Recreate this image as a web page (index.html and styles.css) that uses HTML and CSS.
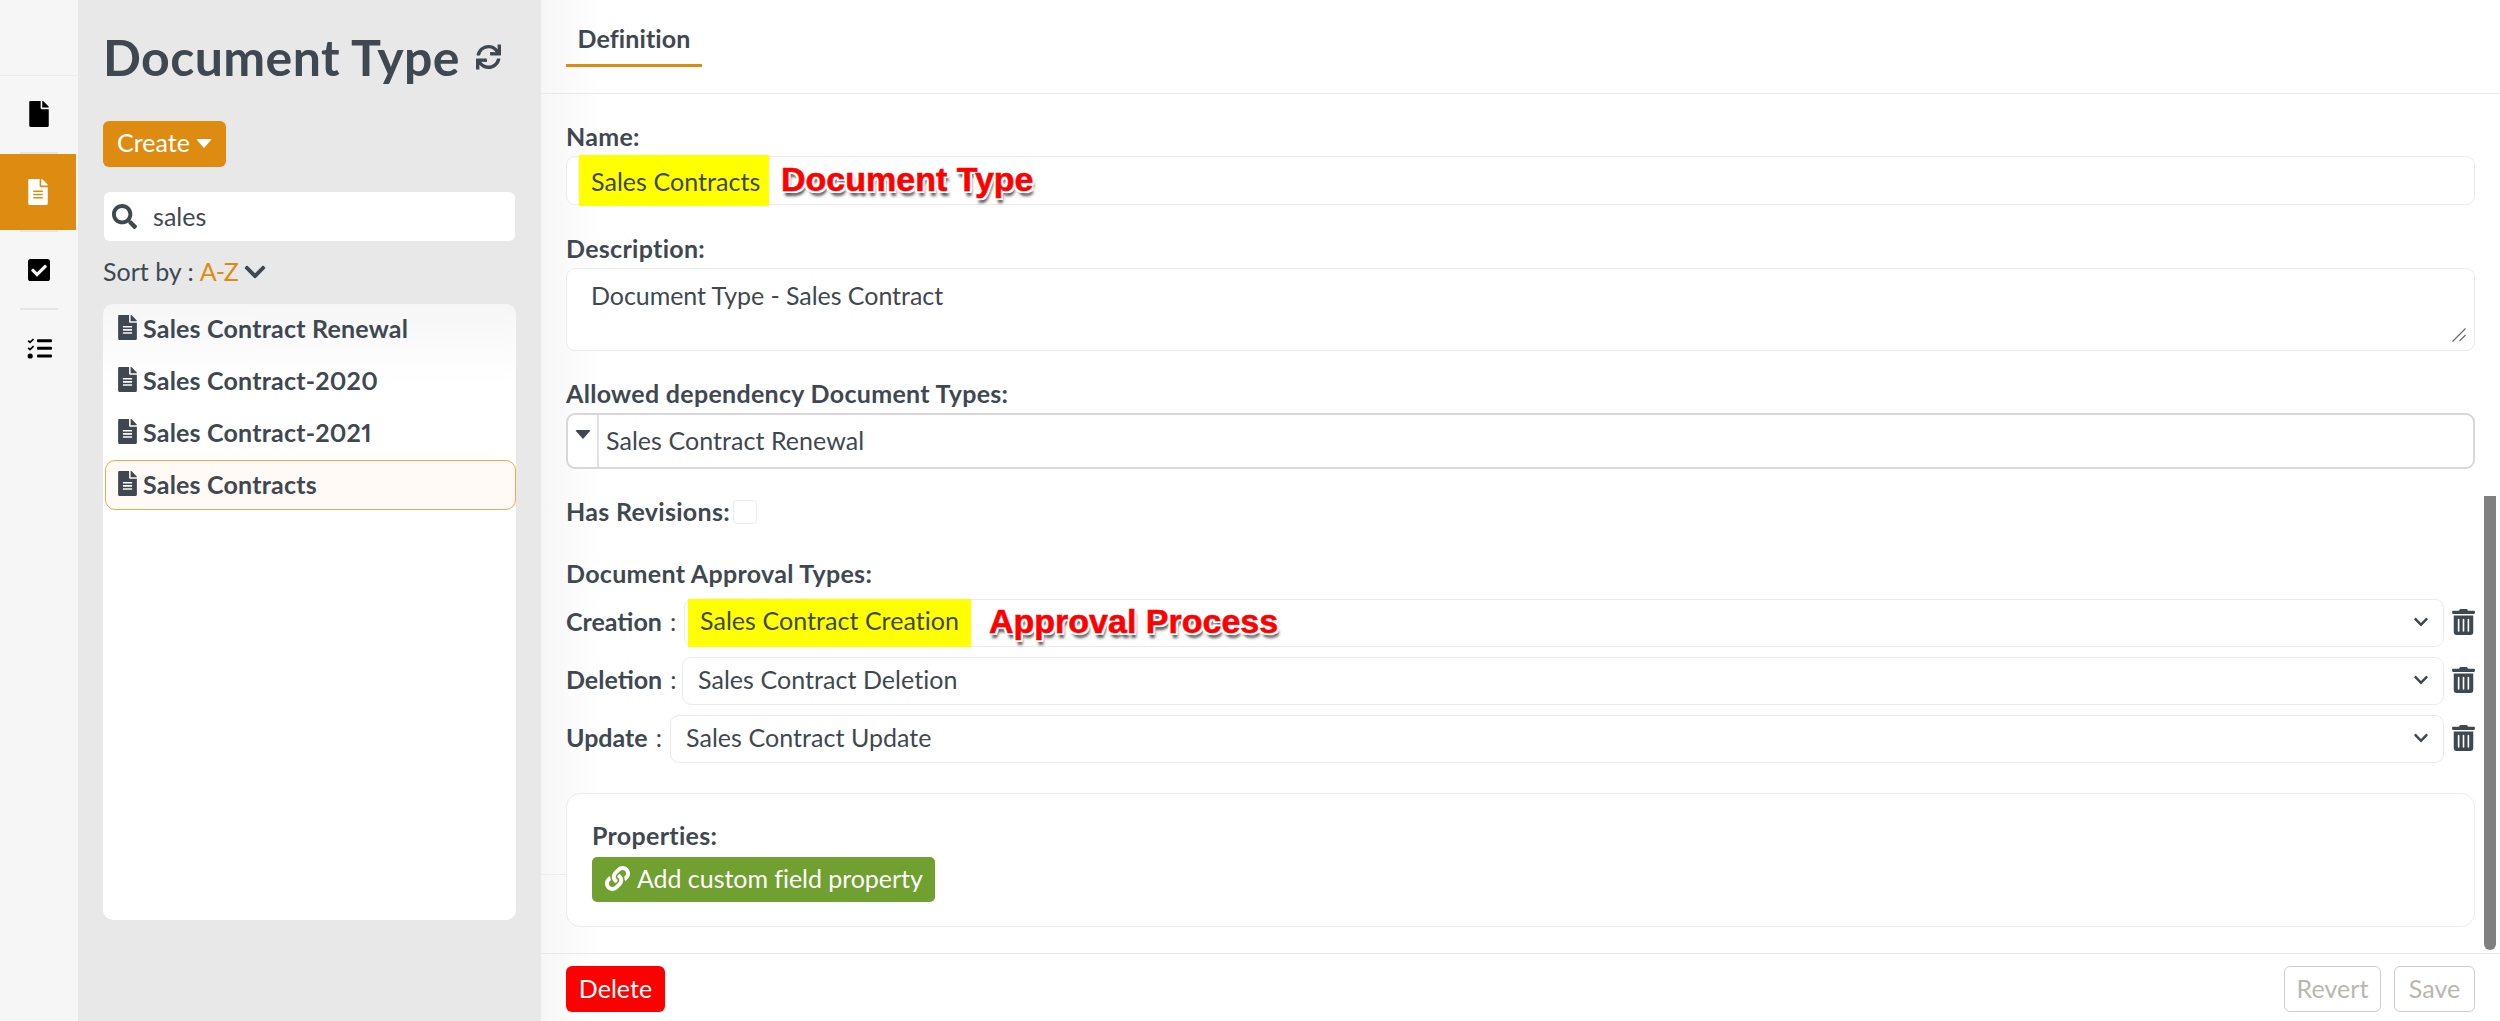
FILE: index.html
```html
<!DOCTYPE html>
<html lang="en">
<head>
<meta charset="utf-8">
<title>Document Type</title>
<link rel="stylesheet" href="styles.css">
</head>
<body>
<svg class="defs" aria-hidden="true">
  <symbol id="i-file" viewBox="0 0 384 512"><path d="M224 136V0H24C10.7 0 0 10.7 0 24v464c0 13.3 10.7 24 24 24h336c13.3 0 24-10.7 24-24V160H248c-13.2 0-24-10.8-24-24zm160-14.1v6.1H256V0h6.1c6.4 0 12.5 2.5 17 7l97.9 98c4.5 4.5 7 10.6 7 16.9z"/></symbol>
  <symbol id="i-file-alt" viewBox="0 0 384 512"><path d="M224 136V0H24C10.7 0 0 10.7 0 24v464c0 13.3 10.7 24 24 24h336c13.3 0 24-10.7 24-24V160H248c-13.2 0-24-10.8-24-24zm64 236c0 6.6-5.4 12-12 12H108c-6.6 0-12-5.4-12-12v-8c0-6.6 5.4-12 12-12h168c6.6 0 12 5.4 12 12v8zm0-64c0 6.6-5.4 12-12 12H108c-6.6 0-12-5.4-12-12v-8c0-6.6 5.4-12 12-12h168c6.6 0 12 5.4 12 12v8zm0-72v8c0 6.6-5.4 12-12 12H108c-6.6 0-12-5.4-12-12v-8c0-6.6 5.4-12 12-12h168c6.6 0 12 5.4 12 12zm96-114.1v6.1H256V0h6.1c6.4 0 12.5 2.5 17 7l97.9 98c4.5 4.5 7 10.6 7 16.9z"/></symbol>
  <symbol id="i-check" viewBox="0 0 448 512"><path d="M400 480H48c-26.51 0-48-21.49-48-48V80c0-26.51 21.49-48 48-48h352c26.51 0 48 21.49 48 48v352c0 26.51-21.49 48-48 48zm-204.686-98.059l184-184c6.248-6.248 6.248-16.379 0-22.627l-22.627-22.627c-6.248-6.248-16.379-6.249-22.628 0L184 302.745l-70.059-70.059c-6.248-6.248-16.379-6.248-22.628 0l-22.627 22.627c-6.248 6.248-6.248 16.379 0 22.627l104 104c6.249 6.25 16.379 6.25 22.628.001z"/></symbol>
  <symbol id="i-tasks" viewBox="0 0 25 21"><path d="M0.6 3.2l1.2-1.2 1.2 1.2L6 0.4l1.2 1.2L3 5.6zM0.6 10.4l1.2-1.2 1.2 1.2L6 7.6l1.2 1.2L3 12.8z"/><circle cx="3.2" cy="18" r="2.6"/><rect x="10" y="1.2" width="15" height="3" rx="1"/><rect x="10" y="8.8" width="15" height="3" rx="1"/><rect x="10" y="16.4" width="15" height="3" rx="1"/></symbol>
  <symbol id="i-sync" viewBox="0 0 512 512"><path d="M440.65 12.57l4 82.77A247.16 247.16 0 0 0 255.83 8C134.73 8 33.91 94.92 12.29 209.82A12 12 0 0 0 24.09 224h49.05a12 12 0 0 0 11.67-9.26 175.91 175.91 0 0 1 317-56.94l-101.46-4.86a12 12 0 0 0-12.57 12v47.41a12 12 0 0 0 12 12H500a12 12 0 0 0 12-12V12a12 12 0 0 0-12-12h-47.37a12 12 0 0 0-11.98 12.57zM255.83 432a175.61 175.61 0 0 1-146-77.8l101.8 4.87a12 12 0 0 0 12.57-12v-47.4a12 12 0 0 0-12-12H12a12 12 0 0 0-12 12V500a12 12 0 0 0 12 12h47.35a12 12 0 0 0 12-12.6l-4.15-82.57A247.17 247.17 0 0 0 255.83 504c121.11 0 221.93-86.92 243.55-201.82a12 12 0 0 0-11.8-14.18h-49.05a12 12 0 0 0-11.67 9.26A175.86 175.86 0 0 1 255.83 432z"/></symbol>
  <symbol id="i-search" viewBox="0 0 512 512"><path d="M505 442.7L405.3 343c-4.5-4.5-10.6-7-17-7H372c27.6-35.3 44-79.7 44-128C416 93.1 322.9 0 208 0S0 93.1 0 208s93.1 208 208 208c48.3 0 92.7-16.4 128-44v16.3c0 6.4 2.5 12.5 7 17l99.7 99.7c9.4 9.4 24.6 9.4 33.9 0l28.3-28.3c9.4-9.4 9.4-24.6.1-34zM208 336c-70.7 0-128-57.2-128-128 0-70.7 57.2-128 128-128 70.7 0 128 57.2 128 128 0 70.7-57.2 128-128 128z"/></symbol>
  <symbol id="i-chevron" viewBox="0 0 448 512"><path d="M207.029 381.476L12.686 187.132c-9.373-9.373-9.373-24.569 0-33.941l22.667-22.667c9.357-9.357 24.522-9.375 33.901-.04L224 284.505l154.745-154.021c9.379-9.335 24.544-9.317 33.901.04l22.667 22.667c9.373 9.373 9.373 24.569 0 33.941L240.971 381.476c-9.373 9.372-24.569 9.372-33.942 0z"/></symbol>
  <symbol id="i-trash" viewBox="0 0 448 512"><path d="M32 464a48 48 0 0 0 48 48h288a48 48 0 0 0 48-48V128H32zm272-256a16 16 0 0 1 32 0v224a16 16 0 0 1-32 0zm-96 0a16 16 0 0 1 32 0v224a16 16 0 0 1-32 0zm-96 0a16 16 0 0 1 32 0v224a16 16 0 0 1-32 0zM432 32H312l-9.4-18.7A24 24 0 0 0 281.1 0H166.8a23.72 23.72 0 0 0-21.4 13.3L136 32H16A16 16 0 0 0 0 48v32a16 16 0 0 0 16 16h416a16 16 0 0 0 16-16V48a16 16 0 0 0-16-16z"/></symbol>
  <symbol id="i-link" viewBox="0 0 512 512"><path d="M326.612 185.391c59.747 59.809 58.927 155.698.36 214.59-.11.12-.24.25-.36.37l-67.2 67.2c-59.27 59.27-155.699 59.262-214.96 0-59.27-59.26-59.27-155.7 0-214.96l37.106-37.106c9.84-9.84 26.786-3.3 27.294 10.606.648 17.722 3.826 35.527 9.69 52.721 1.986 5.822.567 12.262-3.783 16.612l-13.087 13.087c-28.026 28.026-28.905 73.66-1.155 101.96 28.024 28.579 74.086 28.749 102.325.51l67.2-67.19c28.191-28.191 28.073-73.757 0-101.83-3.701-3.694-7.429-6.564-10.341-8.569a16.037 16.037 0 0 1-6.947-12.606c-.396-10.567 3.348-21.456 11.698-29.806l21.054-21.055c5.521-5.521 14.182-6.199 20.584-1.731a152.482 152.482 0 0 1 20.522 17.197zM467.547 44.449c-59.261-59.262-155.69-59.27-214.96 0l-67.2 67.2c-.12.12-.25.25-.36.37-58.566 58.892-59.387 154.781.36 214.59a152.454 152.454 0 0 0 20.521 17.196c6.402 4.468 15.064 3.789 20.584-1.731l21.054-21.055c8.35-8.35 12.094-19.239 11.698-29.806a16.037 16.037 0 0 0-6.947-12.606c-2.912-2.005-6.64-4.875-10.341-8.569-28.073-28.073-28.191-73.639 0-101.83l67.2-67.19c28.239-28.239 74.3-28.069 102.325.51 27.75 28.3 26.872 73.934-1.155 101.96l-13.087 13.087c-4.35 4.35-5.769 10.79-3.783 16.612 5.864 17.194 9.042 34.999 9.69 52.721.509 13.906 17.454 20.446 27.294 10.606l37.106-37.106c59.271-59.259 59.271-155.699.001-214.959z"/></symbol>
</svg>

<div class="app">
  <nav class="rail">
    <a class="rail-item"><svg class="ic-rail"><use href="#i-file"/></svg></a>
    <div class="rail-div"></div>
    <a class="rail-item is-active"><svg class="ic-rail"><use href="#i-file-alt"/></svg></a>
    <div class="rail-div"></div>
    <a class="rail-item"><svg class="ic-rail-check"><use href="#i-check"/></svg></a>
    <div class="rail-div"></div>
    <a class="rail-item"><svg class="ic-rail-tasks"><use href="#i-tasks"/></svg></a>
  </nav>

  <aside class="sidebar">
    <div class="title-row">
      <h1 class="title">Document Type</h1>
      <svg class="ic-sync"><use href="#i-sync"/></svg>
    </div>
    <button class="btn-create">Create<span class="caret"></span></button>
    <div class="search">
      <svg class="ic-search"><use href="#i-search"/></svg>
      <span class="search-text">sales</span>
    </div>
    <div class="sort">
      <span>Sort by :</span><span class="sort-val">A-Z</span>
      <svg class="ic-sort"><use href="#i-chevron"/></svg>
    </div>
    <ul class="list">
      <li class="list-item"><svg class="ic-doc"><use href="#i-file-alt"/></svg>Sales Contract Renewal</li>
      <li class="list-item"><svg class="ic-doc"><use href="#i-file-alt"/></svg>Sales Contract-2020</li>
      <li class="list-item"><svg class="ic-doc"><use href="#i-file-alt"/></svg>Sales Contract-2021</li>
      <li class="list-item is-selected"><svg class="ic-doc"><use href="#i-file-alt"/></svg>Sales Contracts</li>
    </ul>
  </aside>

  <main class="main">
    <div class="tabs"><div class="tab">Definition</div></div>
    <div class="side-line"></div>
    <div class="scrollbar"></div>

    <form class="form">
      <div class="label l-name">Name:</div>
      <div class="field f-name">
        <span class="hl hl-name">Sales Contracts</span>
        <span class="note note-doc">Document Type</span>
      </div>

      <div class="label l-next">Description:</div>
      <div class="field f-desc">
        Document Type - Sales Contract
        <svg class="grip" viewBox="0 0 14 14"><path d="M0.5 13.5L13.5 0.5M7.5 13L13.5 7"/></svg>
      </div>

      <div class="label l-allowed">Allowed dependency Document Types:</div>
      <div class="field f-multi">
        <span class="multi-arrow"><span class="caret caret-dark"></span></span>
        <span class="multi-text">Sales Contract Renewal</span>
      </div>

      <div class="check-row">
        <span class="label">Has Revisions:</span>
        <span class="checkbox"></span>
      </div>

      <div class="label l-approval">Document Approval Types:</div>

      <div class="row r-first">
        <span class="label row-label w-creation">Creation <span class="colon">:</span></span>
        <div class="field f-select f-creation">
          <span class="hl hl-creation">Sales Contract Creation</span>
          <span class="note note-approval">Approval Process</span>
          <svg class="ic-select"><use href="#i-chevron"/></svg>
        </div>
        <svg class="ic-trash"><use href="#i-trash"/></svg>
      </div>
      <div class="row">
        <span class="label row-label w-deletion">Deletion <span class="colon">:</span></span>
        <div class="field f-select">
          <span>Sales Contract Deletion</span>
          <svg class="ic-select"><use href="#i-chevron"/></svg>
        </div>
        <svg class="ic-trash"><use href="#i-trash"/></svg>
      </div>
      <div class="row">
        <span class="label row-label w-update">Update <span class="colon">:</span></span>
        <div class="field f-select">
          <span>Sales Contract Update</span>
          <svg class="ic-select"><use href="#i-chevron"/></svg>
        </div>
        <svg class="ic-trash"><use href="#i-trash"/></svg>
      </div>

      <section class="props">
        <div class="label">Properties:</div>
        <button type="button" class="btn-add"><svg class="ic-link"><use href="#i-link"/></svg>Add custom field property</button>
      </section>
    </form>

    <footer class="footer">
      <button class="btn-delete">Delete</button>
      <div class="footer-right">
        <button class="btn-ghost b-revert">Revert</button>
        <button class="btn-ghost b-save">Save</button>
      </div>
    </footer>
  </main>
</div>
</body>
</html>
```

FILE: styles.css
```css
* { box-sizing: border-box; }
html, body { margin: 0; padding: 0; height: 1021px; overflow: hidden; }
body {
  font-family: "Lato", "Liberation Sans", sans-serif;
  font-size: 25px;
  color: #3f4850;
  background: #fff;
  letter-spacing: 0.05px;
  font-variant-numeric: proportional-nums;
}
.defs { position: absolute; width: 0; height: 0; }
svg { fill: currentColor; display: block; flex: none; }
button { font: inherit; letter-spacing: inherit; cursor: pointer; }
ul { list-style: none; margin: 0; padding: 0; }

.app { display: flex; height: 1021px; }

/* rail */
.rail { width: 78px; flex: none; background: #f6f6f6; padding-top: 75px; }
.rail::before { content: ""; display: block; height: 1px; background: #ebebeb; }
.rail-item { display: flex; align-items: center; justify-content: center; height: 76px; color: #000; }
.rail-item.is-active { background: #de8b12; color: #fff; width: 76px; }
.rail-div { height: 2px; margin: 0 20px; background: #e6e6e6; }
.ic-rail { width: 20px; height: 26px; }
.ic-rail-check { width: 22px; height: 26px; }
.ic-rail-tasks { width: 25px; height: 21px; }

/* sidebar */
.sidebar { width: 463px; flex: none; background: #e8e8e8; padding: 30px 25px 0; display: flex; flex-direction: column; align-items: flex-start; }
.title-row { display: flex; align-items: center; height: 54px; }
.title { margin: 0; font-size: 50px; font-weight: 700; line-height: 54px; letter-spacing: 0.4px; }
.ic-sync { width: 25px; height: 26px; margin-left: 16px; margin-top: -1px; }
.btn-create {
  margin-top: 37px; height: 46px; width: 123px; border: 0; border-radius: 6px;
  background: #de8b12; color: #fff; display: flex; align-items: center; justify-content: center; padding: 0 0 4px;
}
.caret { display: inline-block; margin-left: 6px; margin-top: 3px; border-style: solid; border-color: transparent; border-top-color: #fff; border-width: 9px 8.5px 0; border-radius: 2px; }
.search { margin-top: 25px; margin-left: 1px; width: 411px; height: 49px; background: #fff; border-radius: 6px; display: flex; align-items: center; padding-left: 8px; }
.ic-search { width: 25px; height: 25px; }
.search-text { margin-left: 16px; margin-bottom: 2px; }
.sort { margin-top: 15px; height: 32px; display: flex; align-items: center; letter-spacing: 0; }
.sort > span { margin-bottom: 2px; }
.sort-val { color: #de8b12; margin-left: 6px; letter-spacing: -1px; }
.ic-sort { width: 22px; height: 24px; margin-left: 6px; }
.list { margin-top: 16px; width: 413px; height: 616px; border-radius: 10px; background: linear-gradient(#f6f6f6, #fff 80px); padding: 0 0 0 2px; display: flex; flex-direction: column; gap: 2px; }
.list-item { height: 50px; border: 1px solid transparent; border-radius: 10px; display: flex; align-items: center; padding: 0 0 2px 12px; font-weight: 700; letter-spacing: 0.2px; }
.list-item.is-selected { background: #fffaf6; border-color: #f0a94e; }
.ic-doc { width: 19px; height: 25px; margin-right: 6px; margin-top: -2px; }

/* main */
.main { flex: 1; position: relative; display: flex; flex-direction: column; background: linear-gradient(90deg, #f6f6f6, #fff 60px); }
.tabs { height: 94px; flex: none; border-bottom: 1px solid #e8e8e8; padding-left: 25px; }
.tab { width: 136px; height: 67px; padding-top: 23px; line-height: 30px; text-align: center; font-weight: 700; letter-spacing: 0.1px; border-bottom: 3px solid #de8b12; }
.side-line { position: absolute; left: 0; top: 874px; width: 25px; height: 1px; background: #ececec; }
.scrollbar { position: absolute; top: 496px; right: 4px; width: 12px; height: 454px; background: #808080; border-radius: 0 0 6px 6px; }

.form { padding: 0 25px; }
.label { line-height: 28px; padding-bottom: 2px; font-weight: 700; white-space: nowrap; letter-spacing: 0.3px; }
.l-name { margin-top: 28px; }
.l-next { margin-top: 29px; }
.l-allowed { margin-top: 28px; }
.field { position: relative; background: #fff; border: 1px solid #ebebeb; border-radius: 9px; margin-top: 4px; display: flex; align-items: center; }
.f-name { height: 49px; padding-left: 12px; }
.f-desc { height: 83px; padding: 11px 24px 0; line-height: 30px; align-items: flex-start; letter-spacing: -0.05px; }
.hl { background: #ffff00; align-self: stretch; display: flex; align-items: center; margin: -2px 0; }
.hl-name { width: 190px; padding-left: 12px; }
.hl-creation { width: 283px; padding-left: 12px; margin-left: 3px; margin-bottom: -5px; margin-top: -1px; padding-bottom: 6px; }
.note {
  position: absolute; font-family: "Liberation Sans", sans-serif; font-weight: 700; font-size: 34px; line-height: 40px;
  color: #f00; letter-spacing: 0; white-space: nowrap; -webkit-text-stroke: 0.6px #f00;
  text-shadow: 2px 0 0 #fff, -2px 0 0 #fff, 0 2px 0 #fff, 0 -2px 0 #fff, 2px 2px 0 #fff, -2px 2px 0 #fff, 2px -2px 0 #fff, -2px -2px 0 #fff, 2px 5px 3px #555;
}
.note-doc { left: 214px; top: 2px; }
.note-approval { left: 304px; top: 1px; }
.grip { position: absolute; right: 8px; bottom: 8px; width: 14px; height: 14px; fill: none; stroke: #6a6a6a; stroke-width: 1.2; }
.f-multi { height: 56px; border: 2px solid #d8d8d8; border-top-width: 2px; }
.multi-arrow { width: 31px; align-self: stretch; border-right: 2px solid #e2e2e2; display: flex; justify-content: center; padding-top: 15px; }
.caret-dark { margin: 0; border-top-color: #3f4850; height: 0; }
.multi-text { margin-left: 7px; margin-bottom: 2px; }
.check-row { margin-top: 28px; display: flex; align-items: center; height: 30px; }
.checkbox { width: 24px; height: 24px; margin-left: 3px; background: #fff; border: 1px solid #ececec; border-radius: 4px; }
.l-approval { margin-top: 32px; }
.row { display: flex; align-items: center; margin-top: 10px; height: 48px; }
.row-label { flex: none; letter-spacing: 0; margin-bottom: 2px; }
.colon { font-weight: 400; margin-left: 2px; }
.w-creation { width: 118px; }
.w-deletion { width: 116px; }
.w-update { width: 104px; }
.f-select { flex: 1; height: 48px; margin: 0; padding: 0 0 4px 15px; }
.f-creation { padding-left: 0; }
.ic-select { position: absolute; right: 15px; top: 13px; width: 14px; height: 18px; }
.ic-trash { width: 23px; height: 26px; margin-left: 8px; margin-right: 0; margin-top: -2px; }
.props { margin-top: 30px; height: 134px; background: #fff; border: 1px solid #ececec; border-radius: 14px; padding: 27px 25px 0; }
.btn-add { margin-top: 6px; width: 343px; height: 45px; background: #6fa030; color: #fff; border: 0; border-radius: 5px; display: flex; align-items: center; padding: 0 0 3px 13px; letter-spacing: -0.05px; }
.ic-link { width: 25px; height: 25px; margin-right: 7px; }

/* footer */
.footer { margin-top: 26px; border-top: 1px solid #e8e8e8; padding: 12px 25px 0; display: flex; justify-content: space-between; }
.btn-delete { width: 99px; height: 46px; background: #f00; color: #fff; border: 0; border-radius: 6px; padding: 0 0 3px; }
.footer-right { display: flex; gap: 13px; }
.btn-ghost { height: 46px; background: transparent; border: 1px solid #cfcdc8; border-radius: 6px; color: #b9b7b2; padding: 0 0 3px; }
.b-revert { width: 97px; }
.b-save { width: 81px; }
```
